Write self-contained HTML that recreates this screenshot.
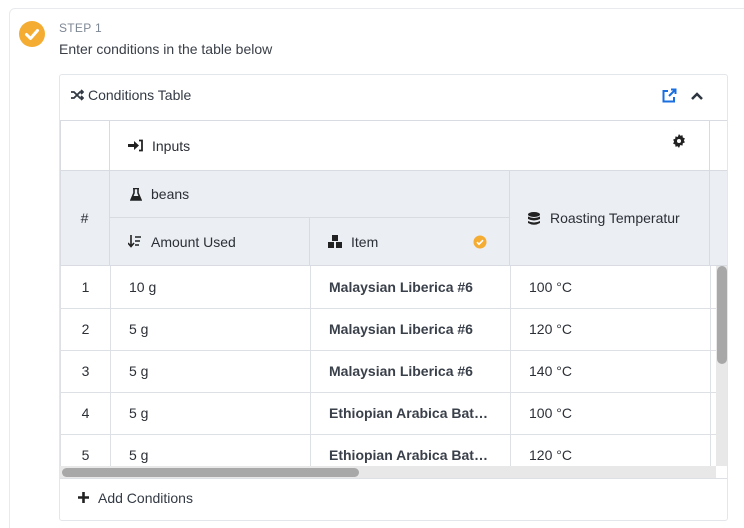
<!DOCTYPE html>
<html style="width:744px;height:528px;overflow:hidden"><head><meta charset="utf-8"><style>
*{box-sizing:border-box;margin:0;padding:0}
body{width:744px;height:528px;background:#fff;font-family:"Liberation Sans",sans-serif;color:#2b2f36;position:relative;overflow:hidden;font-size:14px}
.a{position:absolute}
.outer{left:9px;top:8px;width:760px;height:530px;border:1px solid #e8eaee;border-radius:6px}
.card{left:59px;top:74px;width:669px;height:447px;border:1px solid #e3e6ea;border-radius:3px;background:#fff}
.g{background:#ebeef3}
.t{display:flex;align-items:center;white-space:nowrap;overflow:hidden}
table{border-collapse:collapse;table-layout:fixed;font-size:14px;position:absolute;left:0;top:0;width:670px}
td{border:1px solid #dde1e6;height:42px;white-space:nowrap;overflow:hidden}
td.n{text-align:center}
td.p{padding-left:18px}
td.b{font-weight:bold;color:#3a404a}
</style></head><body>
<div class="a outer"></div>
<svg class="a" style="left:19px;top:21px" width="26" height="26"><circle cx="13" cy="13" r="13" fill="#f5ac32"/><path d="M7.5 13.5l4 4 7-8" stroke="#fff" stroke-width="3" fill="none" stroke-linecap="round" stroke-linejoin="round"/></svg>
<div class="a" style="left:59px;top:21px;font-size:12px;color:#7d8794;letter-spacing:.3px">STEP 1</div>
<div class="a" style="left:59px;top:41px;font-size:14px;color:#3a3f47">Enter conditions in the table below</div>
<div class="a card"></div>
<svg class="a" style="left:71px;top:89px" width="13" height="12"><path d="M0 3h3l6 6h3M0 9h3l6-6h3M10 1l2 2-2 2M10 7l2 2-2 2" stroke="#333a44" stroke-width="1.8" fill="none"/></svg>
<div class="a" style="left:88px;top:87px;font-size:14px;color:#333a44">Conditions Table</div>
<svg class="a" style="left:661px;top:88px" width="17" height="16"><path d="M7 3H2.5v10.5H13V9" stroke="#1a6fe0" stroke-width="2" fill="none"/><path d="M8 8l6-6M10 1.5h4.5V6" stroke="#1a6fe0" stroke-width="2" fill="none"/></svg>
<svg class="a" style="left:690px;top:91px" width="14" height="10"><path d="M2 8l5-5 5 5" stroke="#2d3540" stroke-width="2.5" fill="none"/></svg>
<div class="a" style="left:60px;top:120px;width:667px;height:1px;background:#d8dce2"></div>
<div class="a" style="left:60px;top:121px;width:50px;height:49px;border-right:1px solid #d8dce2;border-left:1px solid #d8dce2"></div>
<div class="a t" style="left:110px;top:121px;width:600px;height:49px;border-right:1px solid #d8dce2;padding-left:18px">
<svg width="16" height="13" style="margin-right:8px"><path d="M0 5h6V2l5 4.5-5 4.5V8H0z" fill="#222"/><path d="M11 1.5h3v10h-3" stroke="#222" stroke-width="1.8" fill="none"/></svg>Inputs</div>
<svg class="a" style="left:672px;top:134px" width="14" height="14" viewBox="0 0 14 14"><path d="M7 0l1.3 1.8 2.2-.6.3 2.3 2.1.9-1 2 1 2-2.1.9-.3 2.3-2.2-.6L7 14l-1.3-1.8-2.2.6-.3-2.3-2.1-.9 1-2-1-2 2.1-.9.3-2.3 2.2.6z" fill="#222"/><circle cx="7" cy="7" r="2" fill="#fff"/></svg>
<div class="a g" style="left:60px;top:170px;width:667px;height:96px;border-top:1px solid #d8dce2;border-bottom:1px solid #d8dce2;border-left:1px solid #d8dce2"></div>
<div class="a t" style="left:60px;top:170px;width:50px;height:96px;border-right:1px solid #d8dce2;justify-content:center">#</div>
<div class="a t" style="left:110px;top:171px;width:400px;height:47px;border-bottom:1px solid #d8dce2;border-right:1px solid #d8dce2;padding-left:20px">
<svg width="12" height="13" style="margin-right:9px"><path d="M3 .5h6M4 1v4L1 12h10L8 5V1" stroke="#222" stroke-width="1.6" fill="none"/><path d="M2.5 8h7L11 12H1z" fill="#222"/></svg>beans</div>
<div class="a t" style="left:110px;top:218px;width:200px;height:47px;border-right:1px solid #d8dce2;padding-left:18px">
<svg width="14" height="13" style="margin-right:9px"><path d="M3 0v11M0 8l3 3.5L6 8M7 2h6M7 6h5M7 10h4" stroke="#222" stroke-width="1.6" fill="none"/></svg>Amount Used</div>
<div class="a t" style="left:310px;top:218px;width:200px;height:47px;border-right:1px solid #d8dce2;padding-left:18px">
<svg width="14" height="13" style="margin-right:9px"><rect x="4" y="0" width="6" height="6" fill="#222"/><rect x="0" y="7" width="6" height="6" fill="#222"/><rect x="8" y="7" width="6" height="6" fill="#222"/></svg>Item</div>
<svg class="a" style="left:473px;top:235px" width="14" height="14"><circle cx="7" cy="7" r="6.5" fill="#f5ac32"/><path d="M4 7.2l2 2 4-4" stroke="#fff" stroke-width="1.6" fill="none"/></svg>
<div class="a t" style="left:510px;top:171px;width:200px;height:94px;border-right:1px solid #d8dce2;padding-left:18px">
<svg width="12" height="13" style="margin-right:10px"><ellipse cx="6" cy="2.5" rx="6" ry="2.5" fill="#222"/><path d="M0 4.5q6 3 12 0v2.5q-6 3-12 0zM0 9q6 3 12 0v2q-6 3.5-12 0z" fill="#222"/></svg>Roasting Temperatur</div>
<div class="a" style="left:60px;top:266px;width:656px;height:200px;overflow:hidden">
 <table>
 <colgroup><col style="width:50px"><col style="width:200px"><col style="width:200px"><col style="width:200px"><col style="width:20px"></colgroup>
 <tr><td class="n" style="border-top:0">1</td><td class="p" style="border-top:0">10 g</td><td class="p b" style="border-top:0">Malaysian Liberica #6</td><td class="p" style="border-top:0">100 °C</td><td style="border-top:0"></td></tr>
 <tr><td class="n">2</td><td class="p">5 g</td><td class="p b">Malaysian Liberica #6</td><td class="p">120 °C</td><td></td></tr>
 <tr><td class="n">3</td><td class="p">5 g</td><td class="p b">Malaysian Liberica #6</td><td class="p">140 °C</td><td></td></tr>
 <tr><td class="n">4</td><td class="p">5 g</td><td class="p b">Ethiopian Arabica Bat…</td><td class="p">100 °C</td><td></td></tr>
 <tr><td class="n">5</td><td class="p">5 g</td><td class="p b">Ethiopian Arabica Bat…</td><td class="p">120 °C</td><td></td></tr>
 </table>
</div>
<div class="a" style="left:716px;top:266px;width:11px;height:200px;background:#e8e8e8"></div>
<div class="a" style="left:717px;top:266px;width:10px;height:98px;background:#a8a8a8;border-radius:5px"></div>
<div class="a" style="left:60px;top:466px;width:656px;height:12px;background:#e8e8e8"></div>
<div class="a" style="left:62px;top:468px;width:297px;height:9px;background:#a8a8a8;border-radius:5px"></div>
<div class="a" style="left:60px;top:478px;width:667px;height:1px;background:#dde1e6"></div>
<svg class="a" style="left:78px;top:492px" width="11" height="11"><path d="M5.5 0v11M0 5.5h11" stroke="#222" stroke-width="2.6"/></svg>
<div class="a" style="left:98px;top:490px;font-size:14px;color:#333a44">Add Conditions</div>
</body></html>
